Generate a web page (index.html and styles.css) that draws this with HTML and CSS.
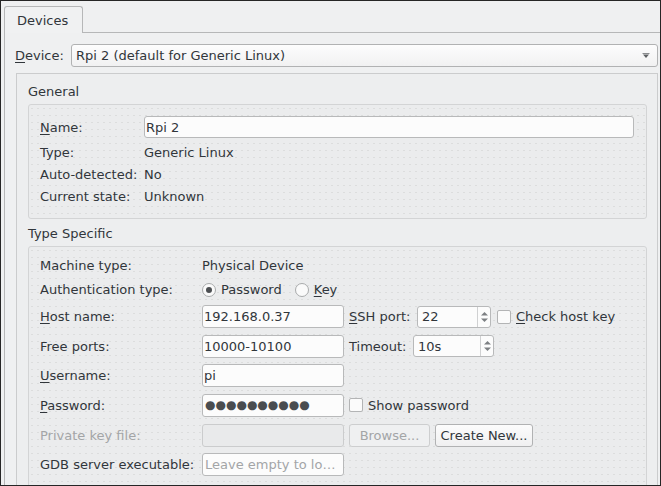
FILE: index.html
```html
<!DOCTYPE html>
<html>
<head>
<meta charset="utf-8">
<title>Devices</title>
<link rel="stylesheet" href="styles.css">
</head>
<body>
<div class="window">
  <div class="tabbar">
    <div class="tab">Devices</div>
    <div class="tabfill"></div>
  </div>
  <div class="panel">
    <div class="device-row">
      <div class="device-label"><u>D</u>evice:</div>
      <div class="combo">
        <span>Rpi 2 (default for Generic Linux)</span>
        <svg class="combo-arrow" width="8" height="6" viewBox="0 0 8 6"><path d="M0.5 0.5h7" stroke="#8a8c8e" stroke-width="1"/><path d="M1 1.5h6L4 5z" fill="#5d6063"/></svg>
      </div>
    </div>
    <div class="scroll">
      <div class="gtitle first">General</div>
      <div class="group general">
        <div class="lbl"><u>N</u>ame:</div>
        <div class="field name-field">Rpi 2</div>
        <div class="lbl">Type:</div>
        <div class="val">Generic Linux</div>
        <div class="lbl">Auto-detected:</div>
        <div class="val">No</div>
        <div class="lbl">Current state:</div>
        <div class="val">Unknown</div>
      </div>
      <div class="gtitle second">Type Specific</div>
      <div class="group specific">
        <div class="lbl">Machine type:</div>
        <div class="val span2">Physical Device</div>

        <div class="lbl">Authentication type:</div>
        <div class="radios span2">
          <span class="radio checked"></span><span class="rtext">Password</span>
          <span class="radio second-radio"></span><span class="rtext"><u>K</u>ey</span>
        </div>

        <div class="lbl"><u>H</u>ost name:</div>
        <div class="field">192.168.0.37</div>
        <div class="extra">
          <span class="ssh-label"><u>S</u>SH port:</span>
          <div class="spin ssh-spin"><span class="spin-text">22</span><span class="spin-btns"><svg width="7" height="12" viewBox="0 0 7 12"><path d="M0 4.5L3.5 1L7 4.5z" fill="#7d8083"/><path d="M0 7.5L3.5 11L7 7.5z" fill="#7d8083"/></svg></span></div>
          <span class="check"></span><span class="ctext"><u>C</u>heck host key</span>
        </div>

        <div class="lbl">Free ports:</div>
        <div class="field">10000-10100</div>
        <div class="extra">
          <span class="timeout-label">Timeout:</span>
          <div class="spin timeout-spin"><span class="spin-text">10s</span><span class="spin-btns"><svg width="7" height="12" viewBox="0 0 7 12"><path d="M0 4.5L3.5 1L7 4.5z" fill="#7d8083"/><path d="M0 7.5L3.5 11L7 7.5z" fill="#7d8083"/></svg></span></div>
        </div>

        <div class="lbl"><u>U</u>sername:</div>
        <div class="field">pi</div>
        <div class="extra"></div>

        <div class="lbl"><u>P</u>assword:</div>
        <div class="field dots">●●●●●●●●●●</div>
        <div class="extra">
          <span class="check"></span><span class="ctext">Show password</span>
        </div>

        <div class="lbl disabled">Private key file:</div>
        <div class="field field-disabled"></div>
        <div class="extra">
          <span class="btn btn-disabled browse">Browse...</span>
          <span class="btn create">Create New...</span>
        </div>

        <div class="lbl">GDB server executable:</div>
        <div class="field placeholder">Leave empty to lo…</div>
        <div class="extra"></div>
      </div>
    </div>
  </div>
</div>
</body>
</html>
```
FILE: styles.css
```css
* {
  box-sizing: border-box;
}

html,
body {
  margin: 0;
  padding: 0;
}

body {
  font-family: "DejaVu Sans", sans-serif;
  font-size: 13px;
  color: #31363b;
  background: #eff0f1;
}

u {
  text-decoration: underline;
  text-underline-offset: 2px;
}

.window {
  width: 661px;
  height: 486px;
  border: 1px solid #262626;
  background: #eff0f1;
  overflow: hidden;
  display: flex;
  flex-direction: column;
}

.tabbar {
  display: flex;
  height: 32px;
  flex: none;
}

.tab {
  margin-left: 3px;
  margin-top: 5px;
  width: 79px;
  height: 27px;
  border: 1px solid #b6b7b8;
  border-bottom: none;
  border-radius: 3px 3px 0 0;
  padding: 1px 0 0 12px;
  line-height: 25px;
  background: #f0f1f2;
}

.tabfill {
  flex: 1;
  border-bottom: 1px solid #b6b7b8;
}

.panel {
  flex: 1;
  margin-left: 3px;
  border-left: 1px solid #b6b7b8;
  padding: 11px 2px 0 10px;
  display: flex;
  flex-direction: column;
  min-height: 0;
}

.device-row {
  display: flex;
  align-items: center;
  height: 23px;
  flex: none;
}

.device-label {
  width: 56px;
  flex: none;
}

.combo {
  flex: 1;
  height: 23px;
  border: 1px solid #b1b2b3;
  border-radius: 3px;
  background: linear-gradient(#fdfdfd, #f1f1f2);
  padding: 0 7px 0 4px;
  display: flex;
  align-items: center;
  justify-content: space-between;
}

.combo-arrow {
  display: block;
}

.scroll {
  margin-top: 6px;
  margin-left: 1px;
  flex: 1;
  border: 1px solid #cbcccd;
  background: #edeeef;
  padding: 0 10px 0 11px;
}

.gtitle {
  line-height: 18px;
  margin-bottom: 3px;
}

.gtitle.first {
  padding-top: 9px;
}

.gtitle.second {
  margin-top: 6px;
}

.group {
  border: 1px solid #d3d4d5;
  border-radius: 3px;
  background-color: #ebeced;
  background-image: radial-gradient(circle, #dcdddd 0.6px, transparent 0.9px);
  background-size: 6px 7px;
}

.general {
  display: grid;
  grid-template-columns: 104px 1fr;
  grid-template-rows: 23px 17px 17px 17px;
  row-gap: 5px;
  padding: 11px 12px 13px 11px;
  align-items: center;
}

.general .name-field {
  align-self: start;
  height: 22px;
}

.lbl,
.val {
  line-height: 17px;
  white-space: nowrap;
}

.disabled {
  color: #a3a5a7;
}

.field {
  height: 23px;
  border: 1px solid #b8b9ba;
  border-radius: 3px;
  background: #fcfcfc;
  padding: 0 2px 0 1px;
  display: flex;
  align-items: center;
  white-space: nowrap;
  overflow: hidden;
}

.field-disabled {
  background: #e9eaeb;
  border-color: #cbcccd;
}

.placeholder {
  color: #a3a5a7;
  padding-left: 2px;
}

.dots {
  font-size: 12px;
  color: #4a4d50;
  padding-left: 2px;
}

.specific {
  display: grid;
  grid-template-columns: 162px 142px 1fr;
  grid-template-rows: 17px 18px repeat(6, 23px);
  row-gap: 6.6px;
  padding: 10px 12px 30px 11px;
  align-items: center;
}

.span2 {
  grid-column: span 2;
}

.radios {
  display: flex;
  align-items: center;
  height: 18px;
}

.radio {
  width: 14px;
  height: 14px;
  border-radius: 50%;
  border: 1px solid #a9abac;
  background: #fafafa;
  flex: none;
  display: flex;
  align-items: center;
  justify-content: center;
}

.radio.checked::after {
  content: "";
  width: 6px;
  height: 6px;
  border-radius: 50%;
  background: #4c4f52;
}

.rtext {
  margin-left: 5px;
}

.second-radio {
  margin-left: 13px;
}

.extra {
  display: flex;
  align-items: center;
  padding-left: 5px;
  height: 23px;
  white-space: nowrap;
}

.ssh-label {
  width: 68px;
  flex: none;
}

.timeout-label {
  width: 64px;
  flex: none;
}

.spin {
  height: 22px;
  border: 1px solid #b8b9ba;
  border-radius: 3px;
  background: #fcfcfc;
  display: flex;
  align-items: stretch;
  flex: none;
}

.ssh-spin {
  width: 74px;
}

.timeout-spin {
  width: 81px;
}

.spin-text {
  flex: 1;
  padding-left: 4px;
  display: flex;
  align-items: center;
}

.spin-btns {
  width: 13px;
  border-left: 1px solid #d0d1d2;
  display: flex;
  align-items: center;
  justify-content: center;
}

.spin-btns svg {
  display: block;
}

.check {
  width: 14px;
  height: 14px;
  border: 1px solid #b3b4b5;
  border-radius: 2px;
  background: #fbfbfb;
  flex: none;
}

.ssh-spin + .check {
  margin-left: 6px;
}

.ctext {
  margin-left: 5px;
}

.btn {
  height: 23px;
  border: 1px solid #b1b2b3;
  border-radius: 3px;
  background: linear-gradient(#fcfcfc, #f0f0f1);
  display: flex;
  align-items: center;
  justify-content: center;
  flex: none;
}

.browse {
  width: 81px;
}

.create {
  width: 98px;
  margin-left: 5px;
}

.btn-disabled {
  color: #a3a5a7;
  border-color: #cdcecf;
  background: #eff0f1;
}
```
